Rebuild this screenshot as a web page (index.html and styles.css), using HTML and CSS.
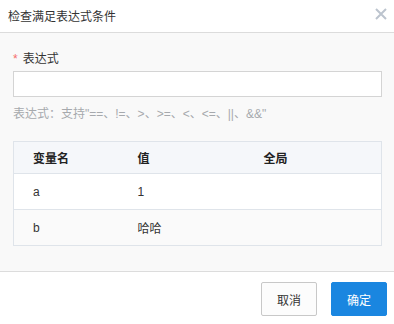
FILE: index.html
```html
<!DOCTYPE html>
<html lang="zh-CN">
<head>
    <meta charset="UTF-8">
    <title>检查满足表达式条件</title>
    <link rel="stylesheet" href="styles.css">
</head>
<body>
    <!-- Dialog -->
    <div class="dialog">
        <!-- Header -->
        <div class="dialog-header">
            <span class="dialog-title">检查满足表达式条件</span>
            <span class="dialog-close">
                <svg width="12" height="12" viewBox="0 0 12 12">
                    <path d="M1 1 L11 11 M11 1 L1 11" stroke="#bcc4ce" stroke-width="2" fill="none"/>
                </svg>
            </span>
        </div>

        <!-- Body -->
        <div class="dialog-body">
            <label class="field-label"><span class="required">*</span>表达式</label>
            <input type="text" class="field-input">
            <p class="field-hint">表达式：支持"==、!=、&gt;、&gt;=、&lt;、&lt;=、||、&amp;&amp;"</p>

            <table class="var-table">
                <thead>
                    <tr>
                        <th class="col-name">变量名</th>
                        <th class="col-value">值</th>
                        <th>全局</th>
                    </tr>
                </thead>
                <tbody>
                    <tr>
                        <td>a</td>
                        <td>1</td>
                        <td></td>
                    </tr>
                    <tr>
                        <td>b</td>
                        <td>哈哈</td>
                        <td></td>
                    </tr>
                </tbody>
            </table>
        </div>

        <!-- Footer -->
        <div class="dialog-footer">
            <button class="btn btn-cancel">取消</button>
            <button class="btn btn-primary">确定</button>
        </div>
    </div>
</body>
</html>
```

FILE: styles.css
```css
/* Reset */
* {
    box-sizing: border-box;
    margin: 0;
    padding: 0;
}

body {
    font-family: "Liberation Sans", "Noto Sans CJK SC", sans-serif;
    font-size: 12px;
    color: #333;
    background-color: #fff;
}

/* Dialog frame */
.dialog {
    width: 394px;
    height: 324px;
    display: flex;
    flex-direction: column;
}

/* Header */
.dialog-header {
    height: 33px;
    display: flex;
    align-items: center;
    justify-content: space-between;
    padding: 0 7px 1px 8px;
    border-bottom: 1px solid #dcdcdc;
    background-color: #fff;
}

.dialog-title {
    font-size: 12px;
    color: #333;
}

.dialog-close {
    display: flex;
    margin-top: -4px;
    cursor: pointer;
}

/* Body */
.dialog-body {
    height: 239px;
    padding: 17px 12px 0 13px;
    background-color: #f9f9f9;
    border-bottom: 1px solid #dcdcdc;
}

.field-label {
    display: block;
    height: 18px;
    line-height: 18px;
    color: #333;
}

.required {
    color: #f56c6c;
    margin-right: 5px;
}

.field-input {
    display: block;
    width: 100%;
    height: 26px;
    margin-top: 3px;
    border: 1px solid #d4d4d4;
    background-color: #fff;
    outline: none;
}

.field-hint {
    margin-top: 8px;
    line-height: 18px;
    color: #a6a9ad;
}

/* Variable table */
.var-table {
    width: 100%;
    margin-top: 18px;
    border-collapse: collapse;
    border: 1px solid #dfe4ea;
    background-color: #fff;
}

.var-table th {
    height: 32px;
    text-align: left;
    font-weight: bold;
    color: #222;
    background-color: #f5f7fa;
    padding-left: 19px;
    border-bottom: 1px solid #dfe4ea;
}

.var-table td {
    height: 36px;
    padding-left: 19px;
    color: #333;
    border-bottom: 1px solid #dfe4ea;
}

.var-table tbody tr:nth-child(even) td {
    background-color: #fafafa;
}

.col-name {
    width: 105px;
}

.col-value {
    width: 126px;
}

/* Footer */
.dialog-footer {
    flex: 1;
    display: flex;
    justify-content: flex-end;
    align-items: flex-start;
    gap: 14px;
    padding: 10px 7px 0 0;
    background-color: #fff;
}

.btn {
    width: 56px;
    height: 34px;
    font-family: inherit;
    font-size: 12px;
    border-radius: 2px;
    cursor: pointer;
}

.btn-cancel {
    background-color: #fcfcfc;
    color: #333;
    border: 1px solid #c8c8c8;
}

.btn-primary {
    background-color: #1a86e0;
    color: #fff;
    border: 1px solid #1a86e0;
}
```
